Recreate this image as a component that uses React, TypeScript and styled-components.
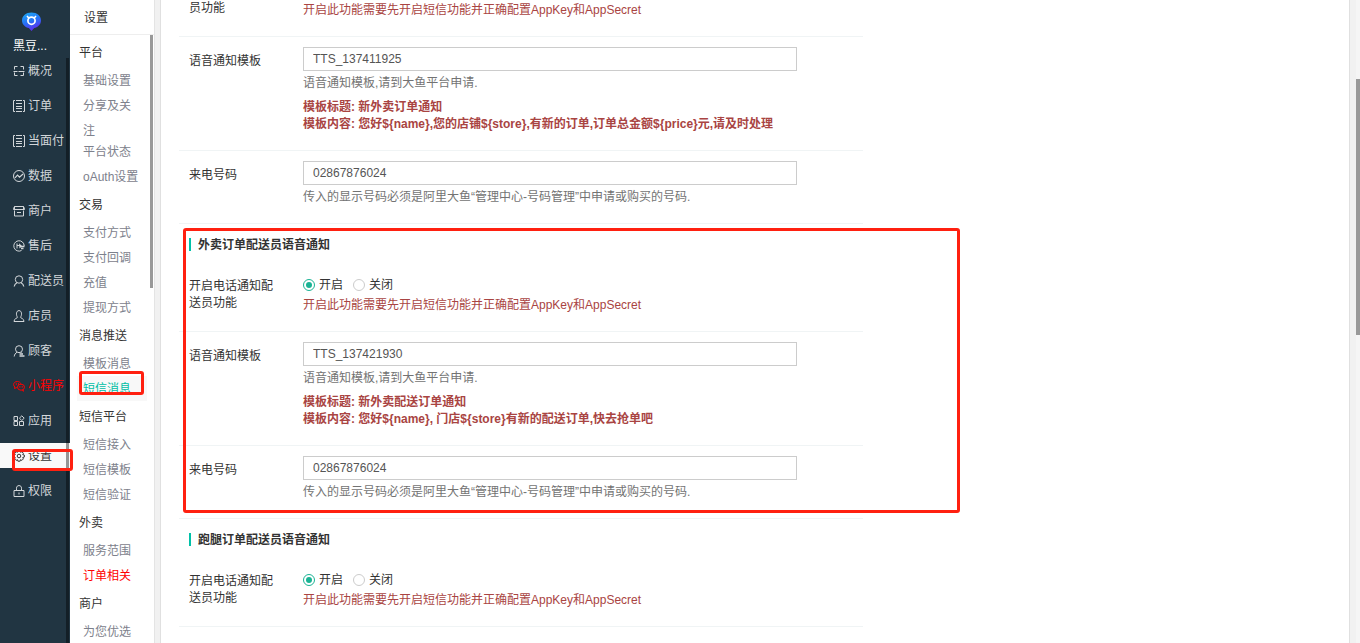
import React, { ReactNode, useState } from "react";
import styled, { createGlobalStyle, css } from "styled-components";

const Global = createGlobalStyle`
  * { box-sizing: border-box; }
  body {
    margin: 0;
    background: #f1f1f1;
    color: #333;
    font: 12px/17px "Liberation Sans", "Noto Sans CJK SC", sans-serif;
  }
  a { color: inherit; text-decoration: none; }
  input { font: inherit; }
`;

const Shell = styled.div`
  display: flex;
  height: 100vh;
  overflow: hidden;
`;

/* text that stands beside an icon, bar or radio; centres the CJK glyphs on it */
const Caption = styled.span`
  padding-top: 2px;
  line-height: 15px;
`;

/* ---------- primary navigation ---------- */

const Sidebar = styled.nav`
  position: relative;
  flex: 0 0 70px;
  display: flex;
  flex-direction: column;
  background: #213542;
`;

const Brand = styled.header`
  display: flex;
  flex-direction: column;
  height: 58px;
  padding-top: 11px;
  color: #fff;
  svg { display: block; margin-left: 21px; }
  span { margin: 6px 0 0 13px; }
`;

const SideItem = styled.a<{ $tone?: "active" | "alert" }>`
  display: flex;
  align-items: center;
  gap: 3px;
  height: 25px;
  margin-bottom: 10px;
  padding-left: 13px;
  color: #d3d7da;
  white-space: nowrap;
  svg { flex: none; }
  ${(p) => p.$tone === "alert" && css`color: #f00;`}
  ${(p) => p.$tone === "active" && css`color: #333; background: #f9f9f9;`}
`;

const SideThumb = styled.span`
  position: absolute;
  top: 58px;
  bottom: 0;
  right: 1px;
  width: 3px;
  background: rgba(0, 0, 0, 0.4);
`;

/* ---------- secondary navigation ---------- */

const Submenu = styled.nav`
  position: relative;
  flex: 0 0 85px;
  overflow: hidden;
  background: #fff;
  border-right: 1px solid #e4e4e4;
`;

const SubmenuTitle = styled.header`
  height: 35px;
  padding: 2px 0 0 14px;
  line-height: 32px;
  border-bottom: 1px solid #eee;
`;

const SubmenuBody = styled.div`
  padding: 2px 7px 0;
`;

const GroupName = styled.h2`
  margin: 0;
  padding: 2px 0 0 2px;
  font-size: 12px;
  font-weight: 400;
  line-height: 29px;
`;

const SubItem = styled.a<{ $tone?: "active" | "alert"; $tall?: boolean }>`
  position: relative;
  display: block;
  height: ${(p) => (p.$tall ? 46 : 25)}px;
  padding: 1px 5px 0 6px;
  line-height: 25px;
  color: #7d818c;
  ${(p) => p.$tone === "alert" && css`color: #f00;`}
  ${(p) => p.$tone === "active" && css`color: #00bfa5; background: #f8f8f8;`}
`;

const SubmenuThumb = styled.span`
  position: absolute;
  top: 35px;
  right: 1px;
  width: 3px;
  height: 253px;
  background: #999;
`;

/* ---------- content ---------- */

const Main = styled.main`
  flex: 1;
  min-width: 0;
  margin: 0 6px 0 5px;
  overflow: hidden;
  background: #fff;
  border: solid #e0e0e0;
  border-width: 0 1px;
`;

const Form = styled.form`
  max-width: 702px;
  margin-top: -2px;
  padding-left: 18px;
`;

const Section = styled.section`
  position: relative;
`;

const SectionTitle = styled.h3`
  display: flex;
  align-items: center;
  gap: 7px;
  margin: 0;
  padding: 12px 10px 13px;
  font-size: 12px;
  &::before {
    content: "";
    width: 2px;
    height: 13px;
    background: #00c1a8;
  }
`;

const Row = styled.div<{ $clipped?: boolean }>`
  display: flex;
  padding: ${(p) => (p.$clipped ? 0 : 10)}px 66px 17px 10px;
  border-bottom: 1px solid #f0f4f5;
`;

const labelBox = css`
  flex: 0 0 114px;
  padding-right: 20px;
`;

const FieldLabel = styled.label`
  ${labelBox}
  padding-top: 6px;
`;

const GroupLabel = styled.span`
  ${labelBox}
  padding-top: 2px;
`;

const Control = styled.div`
  flex: 1;
  min-width: 0;
`;

const TextInput = styled.input`
  display: block;
  width: 100%;
  height: 24px;
  padding: 0 9px;
  color: #555;
  background: #fff;
  border: 1px solid #ccc;
  outline: 0;
`;

const Help = styled.p<{ $warn?: boolean }>`
  margin: 4px 0 0;
  color: ${(p) => (p.$warn ? "#a94442" : "#737373")};
`;

const Template = styled.p`
  margin: 7px 0 0;
  color: #a94442;
  font-weight: 700;
  white-space: pre-line;
`;

const RadioGroup = styled.div`
  display: flex;
  gap: 10px;
  label { display: flex; align-items: center; gap: 4px; }
`;

const Radio = styled.input`
  appearance: none;
  display: grid;
  place-content: center;
  width: 12px;
  height: 12px;
  margin: 0;
  border: 1px solid #ccc;
  border-radius: 50%;
  &:checked { border-color: #1ab394; }
  &:checked::before {
    content: "";
    width: 6px;
    height: 6px;
    border-radius: 50%;
    background: #1ab394;
  }
`;

const PageTrack = styled.div`
  flex: 0 0 4px;
  padding-top: 79px;
  background: #f5f5f5;
  &::before {
    content: "";
    display: block;
    height: 256px;
    background: #999;
  }
`;

/* red frames laid over the places to look at */
const Mark = styled.span`
  position: absolute;
  z-index: 2;
  border: 3px solid #ff2010;
  border-radius: 3px;
  pointer-events: none;
`;

const SectionMark = styled(Mark)`
  top: 4px;
  bottom: 6px;
  left: 4px;
  right: -97px;
`;

const SideMarkAnchor = styled.span`
  position: relative;
  display: block;
`;

const SideMark = styled(Mark)`
  top: 6px;
  left: 12px;
  width: 61px;
  height: 22px;
`;

const SubMark = styled(Mark)`
  top: -5px;
  left: 2px;
  width: 65px;
  height: 24px;
`;

/* ---------- icons ---------- */

const Icon = ({ children }: { children: ReactNode }) => (
  <svg width="12" height="12" viewBox="0 0 12 12" fill="none" stroke="currentColor" aria-hidden="true">
    {children}
  </svg>
);

const icons: Record<string, ReactNode> = {
  overview: <Icon><path d="M4.500 1.500h-3v3M7.500 1.500h3v3M4.500 10.500h-3v-3M7.500 10.500h3v-3M.5 6.500h4M5.500 6.500h6" /></Icon>,
  list: <Icon><path d="M2 .5H.5v11H2M10 .5h1.500v11H10M3 .5h6M3 3.500h6M3 6.500h6M3 8.500h6M3 11.500h6" /></Icon>,
  chart: <Icon><circle cx="6" cy="6" r="5.500" /><path d="M2 7.800 4.500 5.200l2 2L10 4" strokeWidth="1.200" /></Icon>,
  shop: <Icon><path d="M1.500 5.500v-4h9v4M.5 4.500c0-1 .5-2 1-3M11.500 4.500c0-1-.5-2-1-3M.5 4.500h11M1.500 6v5h9V6M4 7.500h4" /></Icon>,
  service: <Icon><path d="M8.500 10.500A5.200 5.200 0 1 1 11.200 6" /><path d="M4 3.500v5M4 5.500h3" /><path d="M6 3.200 9 6 6.500 8.500z" fill="currentColor" stroke="none" /><path d="M7 6.500h4.500M8 8.500h2.500" strokeWidth="1.500" /></Icon>,
  courier: <Icon><circle cx="6" cy="4.500" r="3.700" /><path d="M4 7.800C2.500 8.500 1.500 9.700 1.200 11.500M8 7.800c1.500.7 2.500 1.900 2.800 3.700" strokeWidth="1.200" /></Icon>,
  clerk: <Icon><path d="M4.500 7.200C2.900 5.200 3 .6 6 .6s3.100 4.600 1.500 6.600c0 1.200 3.500 1 3.500 4.300H1c0-3.300 3.500-3.100 3.500-4.300z" /></Icon>,
  customer: <Icon><circle cx="6" cy="4.200" r="3.500" /><path d="M4 7.300C2.500 8 1.500 9.500 1.200 11.500M8 7.300l1 1" /><path d="M6.500 9h3.500M6.500 11h5" strokeWidth="1.300" /></Icon>,
  mini: <Icon><path d="M7.800 3.800C7.300 2.300 6 1.500 4.300 1.500 2.200 1.500.6 2.800.6 4.600c0 1 .5 1.800 1.300 2.400L1.500 8.500l1.700-.8h1" /><ellipse cx="8" cy="7.200" rx="3.500" ry="3" /><path d="M9.500 9.800l1.200 1.500M2.800 4h1M5 4h1M6.200 6.800h1.200M8.700 6.800h1.200" strokeWidth="1.300" /></Icon>,
  apps: <Icon><path d="M1 1.500h3.500v4H1zM1 6.500h3.500v4H1zM6.500 6.500h4v4h-4zM8.800.8l2.400 2.400-2.400 2.300-2.400-2.300z" /></Icon>,
  settings: (
    <Icon>
      <circle cx="6" cy="6" r="1.800" />
      <path d="M4.900.8h2.200l.4 1.500 1.400-.6 1.500 1.600-.7 1.300 1.600.4v2.100l-1.600.4.7 1.400-1.500 1.500-1.400-.7-.4 1.500H4.900l-.4-1.500-1.400.7-1.500-1.500.7-1.400L.7 7.100V5l1.600-.4-.7-1.300 1.500-1.600 1.400.6z" />
    </Icon>
  ),
  lock: <Icon><path d="M1 5.500h10v6H1zM3.500 5.500V3.200C3.500 1.500 4.500.6 6 .6s2.500.9 2.500 2.600v2.300M6 7.500v2" /></Icon>,
};

const Logo = () => (
  <svg width="21" height="20" viewBox="0 0 21 20" role="img" aria-label="logo">
    <defs>
      <linearGradient id="pin" x1="0" y1="0" x2=".4" y2="1">
        <stop offset="0" stopColor="#1fb0f5" />
        <stop offset=".55" stopColor="#2573f5" />
        <stop offset="1" stopColor="#5b2ff0" />
      </linearGradient>
    </defs>
    <path d="M10.500 1.500C16 1.500 20 5 20 9.500c0 4.300-3.500 6.800-6.800 7.500L10.500 20l-2.700-3C4.500 16.300 1 13.800 1 9.500 1 5 5 1.500 10.500 1.500z" fill="url(#pin)" />
    <circle cx="10.500" cy="9.700" r="3.600" fill="none" stroke="#fff" strokeWidth="1.700" />
    <path d="M6 5 8 7.200M15 5 13 7.200" stroke="#fff" strokeWidth="1.600" />
  </svg>
);

/* ---------- data ---------- */

type Tone = "active" | "alert";

const sideItems: { icon: string; text: string; tone?: Tone }[] = [
  { icon: "overview", text: "概况" },
  { icon: "list", text: "订单" },
  { icon: "list", text: "当面付" },
  { icon: "chart", text: "数据" },
  { icon: "shop", text: "商户" },
  { icon: "service", text: "售后" },
  { icon: "courier", text: "配送员" },
  { icon: "clerk", text: "店员" },
  { icon: "customer", text: "顾客" },
  { icon: "mini", text: "小程序", tone: "alert" },
  { icon: "apps", text: "应用" },
  { icon: "settings", text: "设置", tone: "active" },
  { icon: "lock", text: "权限" },
];

const groups: { name: string; items: { text: string; tone?: Tone; tall?: boolean }[] }[] = [
  { name: "平台", items: [{ text: "基础设置" }, { text: "分享及关注", tall: true }, { text: "平台状态" }, { text: "oAuth设置" }] },
  { name: "交易", items: [{ text: "支付方式" }, { text: "支付回调" }, { text: "充值" }, { text: "提现方式" }] },
  { name: "消息推送", items: [{ text: "模板消息" }, { text: "短信消息", tone: "active" }] },
  { name: "短信平台", items: [{ text: "短信接入" }, { text: "短信模板" }, { text: "短信验证" }] },
  { name: "外卖", items: [{ text: "服务范围" }, { text: "订单相关", tone: "alert" }] },
  { name: "商户", items: [{ text: "为您优选" }] },
];

const smsHelp = "开启此功能需要先开启短信功能并正确配置AppKey和AppSecret";

/* ---------- form rows ---------- */

const SwitchRow = ({ id }: { id: string }) => {
  const [on, setOn] = useState(true);
  return (
    <Row>
      <GroupLabel id={`${id}-label`}>开启电话通知配送员功能</GroupLabel>
      <Control>
        <RadioGroup role="radiogroup" aria-labelledby={`${id}-label`}>
          <label>
            <Radio type="radio" name={id} checked={on} onChange={() => setOn(true)} />
            <Caption>开启</Caption>
          </label>
          <label>
            <Radio type="radio" name={id} checked={!on} onChange={() => setOn(false)} />
            <Caption>关闭</Caption>
          </label>
        </RadioGroup>
        <Help $warn>{smsHelp}</Help>
      </Control>
    </Row>
  );
};

const TemplateRow = ({ id, value, text }: { id: string; value: string; text: string }) => (
  <Row>
    <FieldLabel htmlFor={id}>语音通知模板</FieldLabel>
    <Control>
      <TextInput id={id} type="text" defaultValue={value} />
      <Help>语音通知模板,请到大鱼平台申请.</Help>
      <Template>{text}</Template>
    </Control>
  </Row>
);

const PhoneRow = ({ id }: { id: string }) => (
  <Row>
    <FieldLabel htmlFor={id}>来电号码</FieldLabel>
    <Control>
      <TextInput id={id} type="text" defaultValue="02867876024" />
      <Help>传入的显示号码必须是阿里大鱼“管理中心-号码管理”中申请或购买的号码.</Help>
    </Control>
  </Row>
);

export default function App() {
  return (
    <>
      <Global />
      <Shell>
        <Sidebar>
          <Brand>
            <Logo />
            <Caption>黑豆...</Caption>
          </Brand>
          {sideItems.map((item) => (
            <SideMarkAnchor key={item.text}>
              <SideItem href="#" $tone={item.tone}>
                {icons[item.icon]}
                <Caption>{item.text}</Caption>
              </SideItem>
              {item.tone === "active" && <SideMark />}
            </SideMarkAnchor>
          ))}
          <SideThumb />
        </Sidebar>

        <Submenu>
          <SubmenuTitle>设置</SubmenuTitle>
          <SubmenuBody>
            {groups.map((group) => (
              <div key={group.name}>
                <GroupName>{group.name}</GroupName>
                {group.items.map((item) => (
                  <SubItem key={item.text} href="#" $tone={item.tone} $tall={item.tall}>
                    {item.text}
                    {item.tone === "active" && <SubMark />}
                  </SubItem>
                ))}
              </div>
            ))}
          </SubmenuBody>
          <SubmenuThumb />
        </Submenu>

        <Main>
          <Form>
            <Section>
              <Row $clipped>
                <GroupLabel>员功能</GroupLabel>
                <Control>
                  <Help $warn>{smsHelp}</Help>
                </Control>
              </Row>
              <TemplateRow
                id="store-template"
                value="TTS_137411925"
                text={"模板标题: 新外卖订单通知\n模板内容: 您好${name},您的店铺${store},有新的订单,订单总金额${price}元,请及时处理"}
              />
              <PhoneRow id="store-phone" />
            </Section>

            <Section>
              <SectionTitle><Caption>外卖订单配送员语音通知</Caption></SectionTitle>
              <SwitchRow id="takeout-switch" />
              <TemplateRow
                id="takeout-template"
                value="TTS_137421930"
                text={"模板标题: 新外卖配送订单通知\n模板内容: 您好${name}, 门店${store}有新的配送订单,快去抢单吧"}
              />
              <PhoneRow id="takeout-phone" />
              <SectionMark />
            </Section>

            <Section>
              <SectionTitle><Caption>跑腿订单配送员语音通知</Caption></SectionTitle>
              <SwitchRow id="errand-switch" />
            </Section>
          </Form>
        </Main>
        <PageTrack />
      </Shell>
    </>
  );
}
